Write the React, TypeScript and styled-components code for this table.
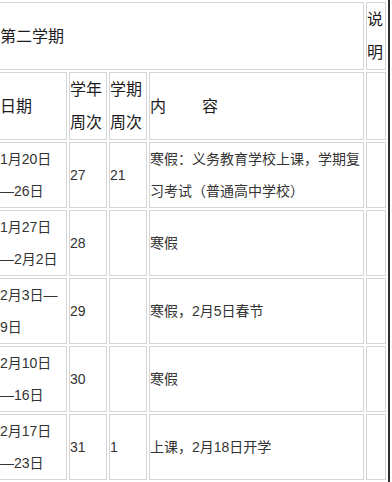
import React from "react";
import styled, { createGlobalStyle } from "styled-components";

// Winter term calendar table (第二学期)
const GlobalStyle = createGlobalStyle`
  html, body {
    margin: 0;
    padding: 0;
    background: #ffffff;
  }
`;

type WeekRow = {
  dates: string[];
  yearWeek: string;
  termWeek: string;
  content: string;
};

const rows: WeekRow[] = [
  { dates: ["1月20日", "—26日"], yearWeek: "27", termWeek: "21", content: "寒假：义务教育学校上课，学期复习考试（普通高中学校）" },
  { dates: ["1月27日", "—2月2日"], yearWeek: "28", termWeek: "", content: "寒假" },
  { dates: ["2月3日—", "9日"], yearWeek: "29", termWeek: "", content: "寒假，2月5日春节" },
  { dates: ["2月10日", "—16日"], yearWeek: "30", termWeek: "", content: "寒假" },
  { dates: ["2月17日", "—23日"], yearWeek: "31", termWeek: "1", content: "上课，2月18日开学" },
];

const App = () => {
  return (
    <>
      <GlobalStyle />
      <Page>
        <Schedule>
          <colgroup>
            <Col $w={68} />
            <Col $w={38} />
            <Col $w={38} />
            <Col $w={215} />
            <Col $w={20} />
          </colgroup>
          <tbody>
            <tr>
              <HeadCell colSpan={4}>第二学期</HeadCell>
              <HeadCell>说明</HeadCell>
            </tr>
            <tr>
              <HeadCell>日期</HeadCell>
              <HeadCell>学年周次</HeadCell>
              <HeadCell>学期周次</HeadCell>
              <HeadCell>
                <Spread>内</Spread>容
              </HeadCell>
              <HeadCell />
            </tr>
            {rows.map((row) => (
              <tr key={row.dates.join("")}>
                <Cell>
                  {row.dates[0]}
                  <br />
                  {row.dates[1]}
                </Cell>
                <Cell>{row.yearWeek}</Cell>
                <Cell>{row.termWeek}</Cell>
                <Cell>{row.content}</Cell>
                <Cell />
              </tr>
            ))}
          </tbody>
        </Schedule>
      </Page>
    </>
  );
};

const Page = styled.div`
  width: 390px;
  height: 482px;
  box-sizing: border-box;
  overflow: hidden;
  border-right: 2px solid #2e2e2e;
`;

const Schedule = styled.table`
  table-layout: fixed;
  width: 391px;
  margin-left: -3px;
  border-collapse: separate;
  border-spacing: 2px;
  font-family: "Liberation Sans", "Noto Sans CJK SC", sans-serif;
`;

const Col = styled.col<{ $w: number }>`
  width: ${(p) => p.$w}px;
`;

const Cell = styled.td`
  padding: 0;
  border: 1px solid #d6d6d6;
  vertical-align: middle;
  font-size: 14px;
  line-height: 32px;
  color: #333333;
  word-break: break-all;
  text-spacing-trim: space-all;
`;

const HeadCell = styled(Cell)`
  font-size: 16px;
  line-height: 33px;
  color: #1c1c1c;
`;

const Spread = styled.span`
  margin-right: 36px;
`;

export default App;
